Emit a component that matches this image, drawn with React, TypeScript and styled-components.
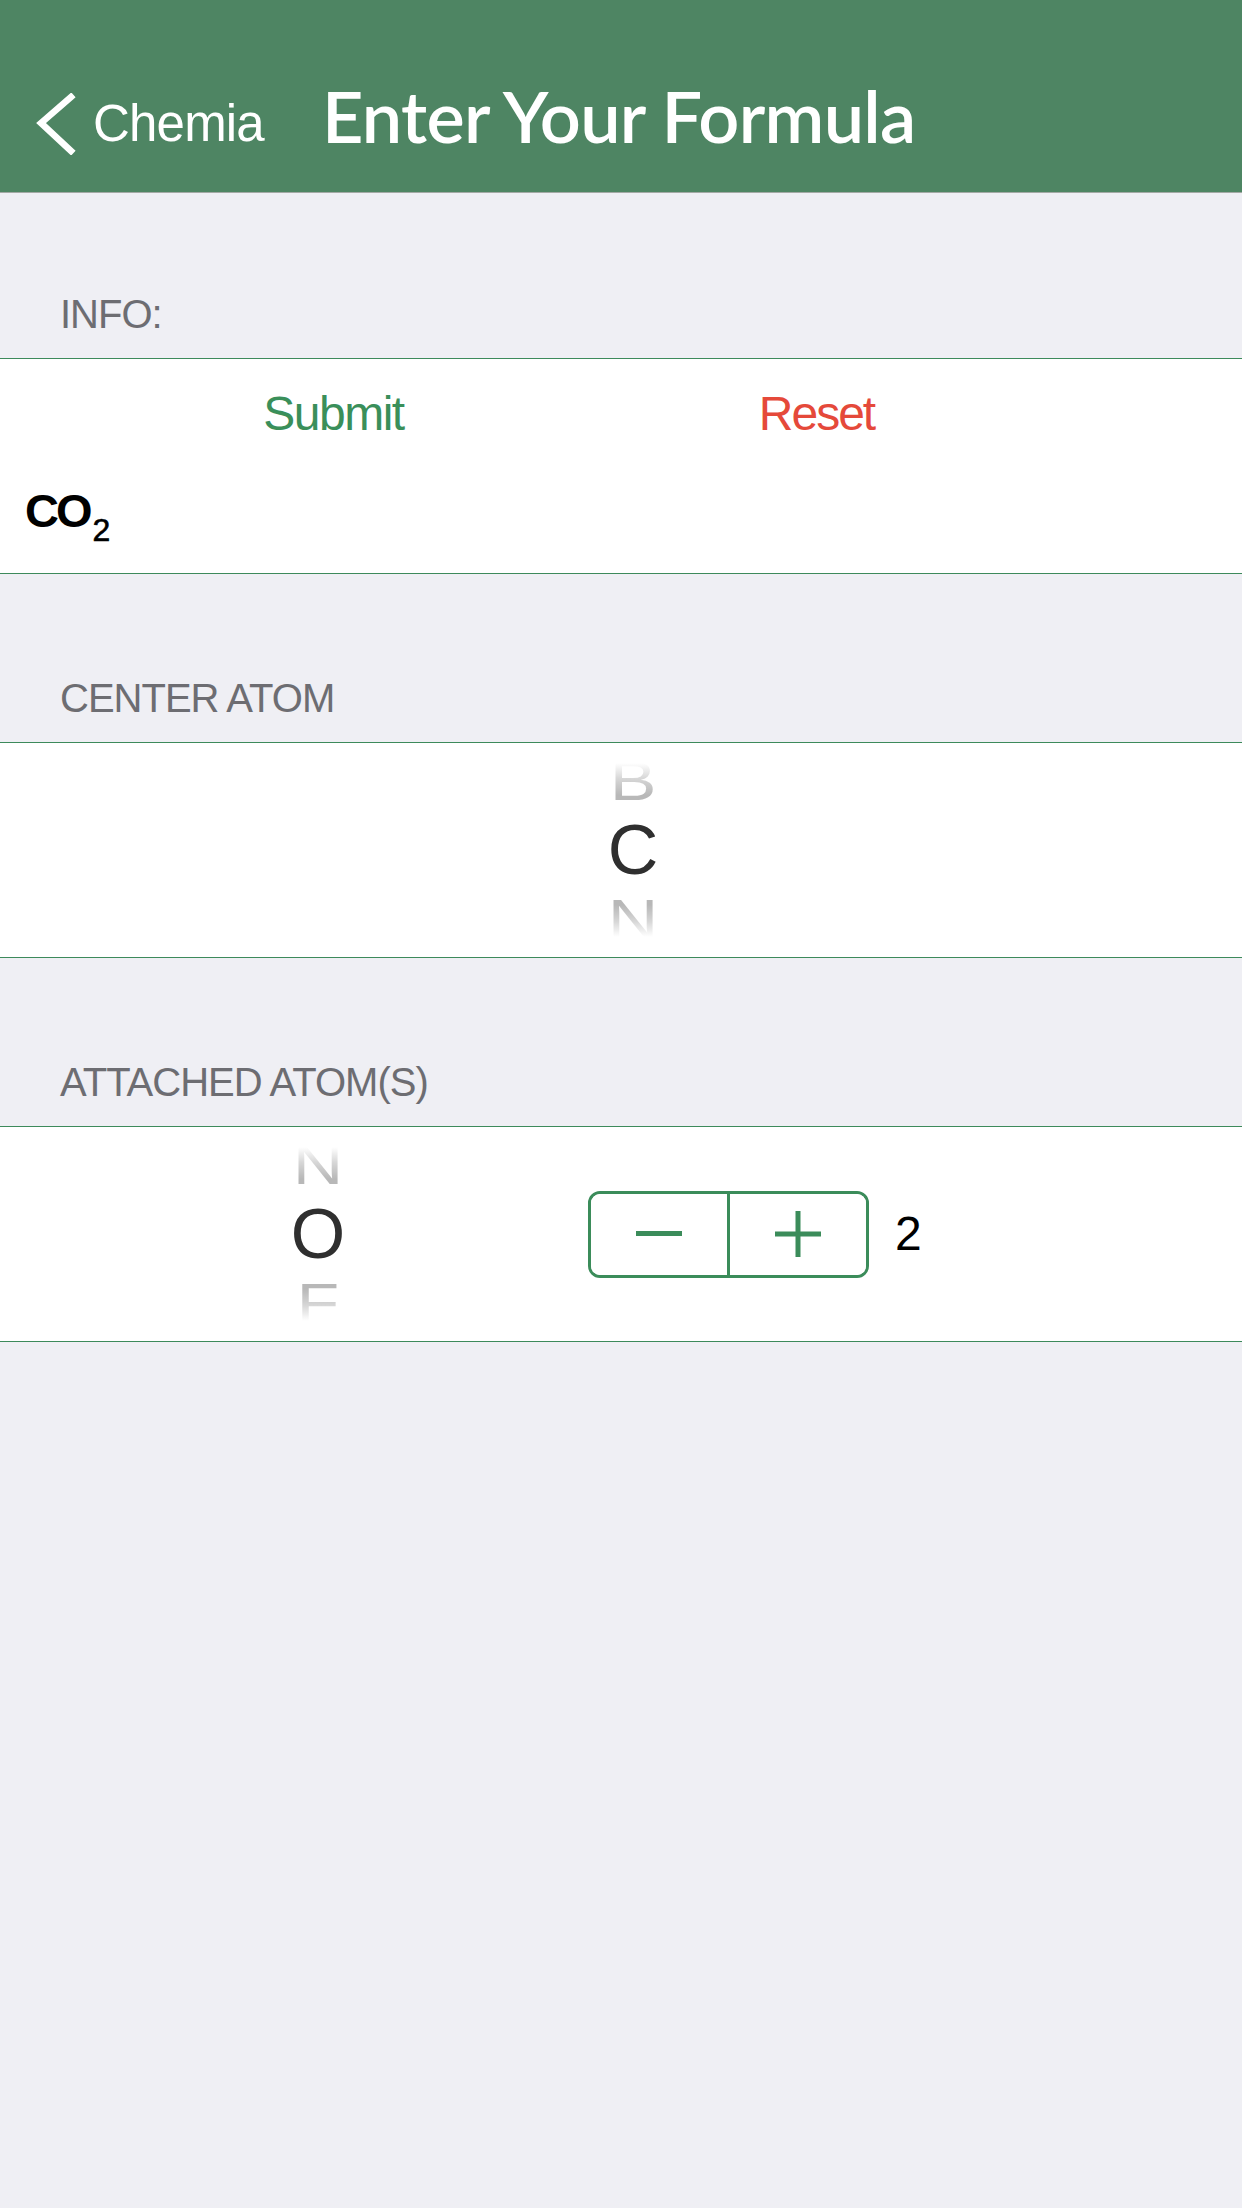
import React from "react";
import styled, { createGlobalStyle } from "styled-components";

const GREEN = "#3b8c5a";
const LINE = "#3d8a5b";

const Global = createGlobalStyle`
  html, body {
    margin: 0;
    padding: 0;
    background: #efeff4;
  }
  body {
    font-family: "Liberation Sans", Arial, sans-serif;
  }
  #root {
    min-height: 2208px;
  }
`;

const Page = styled.div`
  width: 1242px;
  min-height: 2208px;
  background: #efeff4;
  display: flex;
  flex-direction: column;
`;

const NavBar = styled.header`
  box-sizing: border-box;
  height: 193px;
  padding: 56px 0 0 35px;
  background: #4e8563;
  border-bottom: 1px solid #a3a9a5;
  display: flex;
  align-items: center;
`;

const BackButton = styled.div`
  display: flex;
  align-items: center;
  gap: 16px;
  color: #ffffff;
`;

const BackLabel = styled.span`
  font-family: "Liberation Sans", Arial, sans-serif;
  font-size: 51px;
  letter-spacing: -0.8px;
  line-height: 60px;
`;

const Title = styled.h1`
  margin: -18px 0 0 58px;
  font-family: Lato, "Open Sans", sans-serif;
  font-weight: 600;
  font-size: 72px;
  letter-spacing: -0.7px;
  line-height: 80px;
  color: #ffffff;
`;

const SectionLabel = styled.div<{ $first?: boolean }>`
  box-sizing: border-box;
  height: ${(p) => (p.$first ? 165 : 168)}px;
  padding: 0 60px 24px;
  display: flex;
  align-items: flex-end;
  font-size: 40px;
  line-height: 40px;
  letter-spacing: -1px;
  color: #6d6d72;
`;

const Card = styled.section`
  box-sizing: border-box;
  height: 216px;
  background: #ffffff;
  border-top: 1px solid ${LINE};
  border-bottom: 1px solid ${LINE};
`;

const InfoCard = styled(Card)`
  display: flex;
  flex-direction: column;
`;

const ButtonRow = styled.div`
  display: grid;
  grid-template-columns: 1fr 1fr;
  padding: 31px 184px 0 92px;
`;

const TextButton = styled.button<{ $tone: "go" | "stop" }>`
  border: none;
  background: none;
  padding: 0;
  font-family: "Liberation Sans", Arial, sans-serif;
  font-size: 48px;
  line-height: 48px;
  letter-spacing: ${(p) => (p.$tone === "go" ? "-1.5px" : "-2px")};
  color: ${(p) => (p.$tone === "go" ? "#3a8f5a" : "#e5493a")};
  text-align: center;
`;

const Formula = styled.div`
  margin-top: 49px;
  padding-left: 25px;
  font-weight: 700;
  font-size: 47px;
  line-height: 47px;
  letter-spacing: -3px;
  color: #000000;
`;

const Sub = styled.sub`
  font-size: 32px;
  font-weight: 400;
  letter-spacing: 0;
  vertical-align: -14px;
  line-height: 0;
  margin-left: 3px;
  -webkit-text-stroke: 0.6px #000000;
`;

const PickerCard = styled(Card)<{ $offset: number }>`
  display: flex;
  align-items: center;
  padding-left: ${(p) => p.$offset}px;
`;

const Wheel = styled.div`
  width: 130px;
  height: 100%;
  display: flex;
  flex-direction: column;
  align-items: center;
  justify-content: center;
  overflow: hidden;
  font-family: "Liberation Sans", Arial, sans-serif;
  font-size: 70px;
`;

const WheelItem = styled.div`
  height: 78px;
  line-height: 78px;
  color: #2f2f2f;
`;

const WheelSide = styled.div<{ $pos: "above" | "below" }>`
  height: 60px;
  line-height: 60px;
  span {
    display: inline-block;
    transform: scaleY(0.78);
    background: ${(p) =>
      p.$pos === "above"
        ? "linear-gradient(to bottom, rgba(255,255,255,1) 12%, #d6d6d6 45%, #b8b8b8 80%)"
        : "linear-gradient(to bottom, #b8b8b8 20%, #d6d6d6 55%, rgba(255,255,255,1) 88%)"};
    -webkit-background-clip: text;
    background-clip: text;
    color: transparent;
  }
`;

const StepperGroup = styled.div`
  display: flex;
  align-items: center;
  margin-left: 205px;
  gap: 26px;
`;

const Stepper = styled.div`
  box-sizing: border-box;
  width: 281px;
  height: 87px;
  border: 3px solid ${GREEN};
  border-radius: 12px;
  display: flex;
  overflow: hidden;
`;

const StepButton = styled.button<{ $divider?: boolean }>`
  flex: 1;
  border: none;
  background: #ffffff;
  padding: 0;
  display: flex;
  align-items: center;
  justify-content: center;
  border-right: ${(p) => (p.$divider ? `3px solid ${GREEN}` : "none")};
`;

const Count = styled.span`
  font-size: 48px;
  line-height: 48px;
  color: #000000;
`;

function Picker({ above, value, below }: { above: string; value: string; below: string }) {
  return (
    <Wheel>
      <WheelSide $pos="above">
        <span>{above}</span>
      </WheelSide>
      <WheelItem>{value}</WheelItem>
      <WheelSide $pos="below">
        <span>{below}</span>
      </WheelSide>
    </Wheel>
  );
}

export default function App() {
  return (
    <>
      <Global />
      <Page>
        <NavBar>
          <BackButton>
            <svg width="42" height="62" viewBox="0 0 42 62" aria-hidden="true">
              <path d="M36 4 L6 30 L36 58" fill="none" stroke="#ffffff" strokeWidth="6.5" strokeLinecap="square" />
            </svg>
            <BackLabel>Chemia</BackLabel>
          </BackButton>
          <Title>Enter Your Formula</Title>
        </NavBar>

        <SectionLabel $first>INFO:</SectionLabel>
        <InfoCard>
          <ButtonRow>
            <TextButton $tone="go">Submit</TextButton>
            <TextButton $tone="stop">Reset</TextButton>
          </ButtonRow>
          <Formula>
            CO<Sub>2</Sub>
          </Formula>
        </InfoCard>

        <SectionLabel>CENTER ATOM</SectionLabel>
        <PickerCard $offset={568}>
          <Picker above="B" value="C" below="N" />
        </PickerCard>

        <SectionLabel>ATTACHED ATOM(S)</SectionLabel>
        <PickerCard $offset={253}>
          <Picker above="N" value="O" below="F" />
          <StepperGroup>
            <Stepper>
              <StepButton $divider aria-label="decrement">
                <svg width="46" height="6" viewBox="0 0 46 6">
                  <rect x="0" y="0" width="46" height="5" fill={GREEN} />
                </svg>
              </StepButton>
              <StepButton aria-label="increment">
                <svg width="46" height="46" viewBox="0 0 46 46">
                  <rect x="0" y="20.5" width="46" height="5" fill={GREEN} />
                  <rect x="20.5" y="0" width="5" height="46" fill={GREEN} />
                </svg>
              </StepButton>
            </Stepper>
            <Count>2</Count>
          </StepperGroup>
        </PickerCard>
      </Page>
    </>
  );
}
